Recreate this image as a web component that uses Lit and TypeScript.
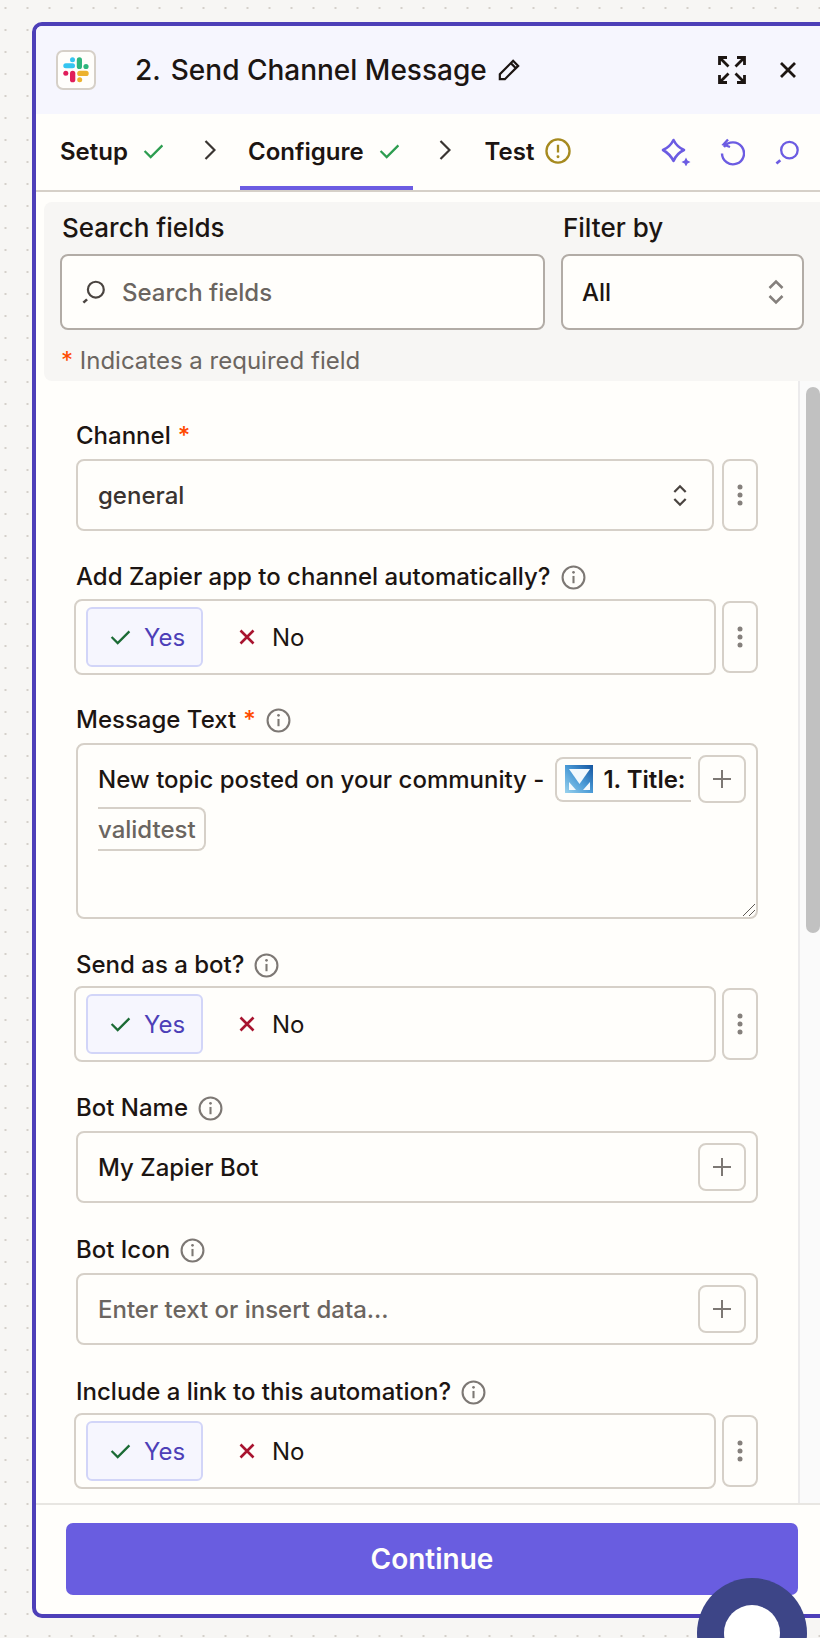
import { LitElement, html, css } from "lit";
import { customElement } from "lit/decorators.js";

const info = html`<svg class="info" viewBox="0 0 24 24" fill="none" stroke="#7d7874" stroke-width="2"><circle cx="12" cy="12" r="10.5"/><path d="M12 10.5v7" stroke-width="2"/><circle cx="12" cy="7" r="1.3" fill="#7d7874" stroke="none"/></svg>`;
const chevUD = (c: string, cls: string) => html`<svg class="${cls}" viewBox="0 0 16 26" fill="none" stroke="${c}" stroke-width="2.6"><path d="M1.5 9 8 2.500l6.500 6.500M1.500 17 8 23.500l6.500-6.500"/></svg>`;
const plus = html`<svg class="plus" viewBox="0 0 20 20" fill="none" stroke="#7d7874" stroke-width="2"><path d="M10 1v18M1 10h18"/></svg>`;
const more = html`<svg class="dots" viewBox="0 0 6 22" fill="#85807c"><circle cx="3" cy="3" r="2.500"/><circle cx="3" cy="11" r="2.500"/><circle cx="3" cy="19" r="2.500"/></svg>`;
const greenCheck = html`<svg class="gcheck" viewBox="0 0 22 16" fill="none" stroke="#2d9d50" stroke-width="2.400"><path d="M1.500 7.500 8 14 20.500 1.500"/></svg>`;
const chevR = html`<svg class="chev" viewBox="0 0 12 20" fill="none" stroke="#3a3532" stroke-width="2.200"><path d="M1.500 1 10.500 10 1.500 19"/></svg>`;
const searchIcon = (c: string, cls: string) => html`<svg class="${cls}" viewBox="0 0 26 26" fill="none" stroke="${c}" stroke-width="2.400"><circle cx="15" cy="10.500" r="8.600"/><path d="M5.500 21 1.500 24.500" stroke-width="2.800"/></svg>`;

const toggle = (m: string) => html`
  <div class="row ${m}">
    <div class="toggle">
      <div class="yes">
        <svg class="ycheck" viewBox="0 0 22 16" fill="none" stroke="#1b6b35" stroke-width="2.400"><path d="M1.500 7.500 8 14 20.500 1.500"/></svg>
        <span>Yes</span>
      </div>
      <div class="no">
        <svg class="xicon" viewBox="0 0 16 16" fill="none" stroke="#a8142f" stroke-width="2.600"><path d="M1.500 1.500l13 13M14.500 1.500l-13 13"/></svg>
        <span>No</span>
      </div>
    </div>
    <div class="more short">${more}</div>
  </div>`;

@customElement("app-root")
export class AppRoot extends LitElement {
  static styles = css`
    :host {
      display: block;
      width: 820px;
      height: 1638px;
      overflow: hidden;
      position: relative;
      box-sizing: border-box;
      padding: 22px 0 0 32px;
      background-color: #f7f6f4;
      background-image: radial-gradient(circle, #d4d0ca 1px, transparent 1.4px);
      background-size: 22px 22px;
      background-position: -5.5px -3px;
      font-family: Inter, "Noto Sans", sans-serif;
      color: #1c1512;
    }
    * { box-sizing: border-box; }
    .card {
      width: 800px;
      height: 1596px;
      border: 4px solid #4d3fb8;
      border-radius: 10px;
      background: #fffefb;
      display: flex;
      flex-direction: column;
      overflow: hidden;
    }
    .head {
      height: 88px;
      flex: none;
      background: #f6f6fe;
      display: flex;
      align-items: center;
      padding-left: 20px;
    }
    .logo {
      width: 40px; height: 40px;
      border: 2px solid #d6d0c8;
      border-radius: 7px;
      background: #fffefb;
      display: flex; align-items: center; justify-content: center;
    }
    .logo svg { width: 26px; height: 26px; }
    .title {
      margin-left: 39px;
      font-size: 28px;
      font-weight: 500;
      display: flex;
      align-items: center;
      white-space: nowrap;
    }
    .title .n { margin-right: 10px; }
    .pencil { width: 22px; height: 22px; margin-left: 11px; }
    .expand { width: 28px; height: 28px; margin-left: auto; }
    .close { width: 16px; height: 16px; margin-left: 34px; margin-right: 32px; flex: none; }
    .tabs {
      height: 78px;
      flex: none;
      border-bottom: 2px solid #d6d0c8;
      display: flex;
      align-items: stretch;
      padding-left: 16px;
    }
    .tab {
      display: flex;
      align-items: center;
      padding: 2px 13px 0 8px;
      border-bottom: 4px solid transparent;
      font-size: 24px;
      font-weight: 600;
      white-space: nowrap;
    }
    .tab.on { border-bottom-color: #6c5ce2; }
    .gcheck { width: 21px; height: 15px; margin-left: 15px; }
    .chev { width: 12px; height: 20px; }
    .chevw { display: flex; align-items: center; padding-bottom: 4px; width: 12px; }
    .c1 { margin: 0 24px 0 27px; }
    .c2 { margin: 0 26px 0 26px; }
    .warn { width: 26px; height: 26px; margin-left: 11px; }
    .tools { margin-left: auto; display: flex; align-items: center; margin-right: 28px; }
    .sparkle { width: 30px; height: 28px; }
    .undo { width: 25px; height: 28px; margin-left: 29px; }
    .find { width: 25px; height: 25px; margin-left: 30px; }
    .panel {
      flex: none;
      margin: 10px 0 0 8px;
      height: 179px;
      background: #f7f6f4;
      border-radius: 8px;
      padding: 0 16px;
      display: flex;
      flex-direction: column;
    }
    .prow { display: grid; grid-template-columns: 485px 243px; gap: 16px; }
    .plabel { font-size: 26px; font-weight: 500; height: 52px; padding: 10px 0 0 2px; line-height: 32px; }
    .pbox {
      height: 76px;
      background: #fffefb;
      border: 2px solid #b2aca6;
      border-radius: 8px;
      display: flex;
      align-items: center;
      font-size: 24px;
    }
    .pbox .sicon { width: 24px; height: 24px; margin: 0 16px 0 20px; }
    .ph { color: #6b6560; font-weight: 500; }
    .all { padding: 0 18px 0 19px; font-weight: 500; justify-content: space-between; }
    .ud-l { width: 16px; height: 26px; }
    .ud-s { width: 14px; height: 23px; }
    .req { font-size: 24px; color: #6b6560; margin-top: 16px; line-height: 30px; padding-left: 1px; }
    .star { color: #ff4a00; }
    .scroll {
      flex: 1;
      min-height: 0;
      display: flex;
      overflow: hidden;
    }
    .form { width: 762px; flex: none; padding: 41px 0 0 40px; }
    .track {
      flex: 1;
      background: #fafafa;
      border-left: 2px solid #ecebec;
      padding: 6px 0 0 6px;
    }
    .thumb { height: 546px; background: #c1c1c1; border-radius: 7px; width: 14px; }
    .label {
      font-size: 24px;
      font-weight: 500;
      height: 28px;
      line-height: 28px;
      display: flex;
      align-items: center;
      white-space: nowrap;
    }
    .label .star { margin-left: 7px; }
    .info { width: 25px; height: 25px; margin-left: 10px; flex: none; }
    .row { display: flex; align-items: center; }
    .m7 { margin-top: 7px; }
    .m8 { margin-top: 8px; }
    .m9 { margin-top: 9px; }
    .select, .input {
      width: 638px;
      height: 72px;
      border: 2px solid #d6d0c8;
      border-radius: 8px;
      display: flex;
      align-items: center;
      padding: 0 25px 0 20px;
      font-size: 24px;
      font-weight: 500;
      color: #3a3330;
    }
    .select { justify-content: space-between; }
    .more {
      width: 36px;
      height: 72px;
      border: 2px solid #d6d0c8;
      border-radius: 8px;
      margin-left: 8px;
      display: flex;
      align-items: center;
      justify-content: center;
    }
    .more.short { margin-left: 6px; }
    .dots { width: 6px; height: 22px; }
    .toggle {
      width: 642px;
      height: 76px;
      margin-left: -2px;
      border: 2px solid #d6d0c8;
      border-radius: 8px;
      padding: 6px 10px;
      display: flex;
      align-items: center;
      font-size: 24px;
      font-weight: 400;
    }
    .yes {
      width: 117px;
      height: 60px;
      background: #f6f6fe;
      border: 2px solid #d2d5f8;
      border-radius: 6px;
      display: flex;
      align-items: center;
      padding-left: 22px;
      color: #4d3fb8;
    }
    .ycheck { width: 21px; height: 15px; margin-right: 13px; flex: none; }
    .no { display: flex; align-items: center; margin-left: 36px; }
    .xicon { width: 16px; height: 16px; margin-right: 17px; }
    .g31 { margin-top: 31px; }
    .g32 { margin-top: 32px; }
    .g33 { margin-top: 33px; }
    .msg {
      margin-top: 9px;
      width: 682px;
      height: 176px;
      border: 2px solid #d6d0c8;
      border-radius: 8px;
      position: relative;
      padding: 10px 9px 0 20px;
      font-size: 24px;
      font-weight: 500;
    }
    .line { display: flex; align-items: center; height: 48px; white-space: nowrap; }
    .chip {
      height: 45px;
      margin-left: 11px;
      width: 136px;
      border: 2px solid #d6d0c8;
      border-right: none;
      border-radius: 8px 0 0 8px;
      display: flex;
      align-items: center;
      padding-left: 8px;
      font-weight: 600;
      flex: none;
      overflow: hidden;
    }
    .mail { width: 28px; height: 28px; margin-right: 10px; flex: none; }
    .pluswrap {
      width: 48px;
      height: 48px;
      flex: none;
      border: 2px solid #d6d0c8;
      border-radius: 8px;
      display: flex;
      align-items: center;
      justify-content: center;
    }
    .plus { width: 20px; height: 20px; }
    .msg .pluswrap { margin-left: 7px; }
    .chip2 {
      margin-top: 4px;
      width: 108px;
      height: 44px;
      border: 2px solid #d6d0c8;
      border-left: none;
      border-radius: 0 8px 8px 0;
      display: flex;
      align-items: center;
      color: #6b6560;
    }
    .grip { position: absolute; right: 0; bottom: 0; width: 14px; height: 14px; }
    .input { width: 682px; justify-content: space-between; padding-right: 10px; color: #1c1512; }
    .foot {
      height: 111px;
      flex: none;
      border-top: 2px solid #e8e6e2;
      padding: 18px 0 0 30px;
    }
    .btn {
      width: 732px;
      height: 72px;
      background: #695de0;
      border-radius: 7px;
      color: #fffefb;
      font-size: 28px;
      font-weight: 600;
      display: flex;
      align-items: center;
      justify-content: center;
    }
    .bubble {
      position: absolute;
      left: 697px;
      top: 1578px;
      width: 110px;
      height: 110px;
      border-radius: 50%;
      background: #3d4587;
      display: flex;
      align-items: center;
      justify-content: center;
    }
    .bubble i { width: 56px; height: 56px; border-radius: 50%; background: #fff; }
  `;

  render() {
    return html`
      <div class="card">
        <div class="head">
          <div class="logo">
            <svg viewBox="0 0 26 26">
              <rect x="0.300" y="6.300" width="11.700" height="5" rx="2.500" fill="#36c5f0"/>
              <circle cx="9.500" cy="2.800" r="2.500" fill="#36c5f0"/>
              <rect x="13.800" y="0.300" width="5.200" height="11.700" rx="2.600" fill="#2eb67d"/>
              <circle cx="23" cy="9.500" r="2.600" fill="#2eb67d"/>
              <rect x="14.200" y="13.800" width="11.500" height="5.200" rx="2.600" fill="#ecb22e"/>
              <circle cx="16.700" cy="22.800" r="2.500" fill="#ecb22e"/>
              <rect x="7" y="13.800" width="5.300" height="11.500" rx="2.600" fill="#e01e5a"/>
              <circle cx="2.800" cy="16.300" r="2.500" fill="#e01e5a"/>
            </svg>
          </div>
          <div class="title"><span class="n">2.</span><span>Send Channel Message</span>
            <svg class="pencil" viewBox="0 0 24 24" fill="none" stroke="#1c1512" stroke-width="2.400"><path d="M2 22v-5.500L16.500 2 22 7.500 7.500 22zM14 4.500l5.500 5.500"/></svg>
          </div>
          <svg class="expand" viewBox="0 0 28 28" fill="none" stroke="#1c1512" stroke-width="2.800">
            <path d="M1.500 9V1.500H9M1.500 1.500l9 9M26.500 9V1.500H19M26.500 1.500l-9 9M1.500 19v7.500H9M1.500 26.500l9-9M26.500 19v7.500H19M26.500 26.500l-9-9"/>
          </svg>
          <svg class="close" viewBox="0 0 16 16" fill="none" stroke="#1c1512" stroke-width="2.800"><path d="M1 1l14 14M15 1 1 15"/></svg>
        </div>
        <div class="tabs">
          <div class="tab"><span>Setup</span>${greenCheck}</div>
          <div class="chevw c1">${chevR}</div>
          <div class="tab on"><span>Configure</span>${greenCheck}</div>
          <div class="chevw c2">${chevR}</div>
          <div class="tab"><span>Test</span>
            <svg class="warn" viewBox="0 0 27 27" fill="none" stroke="#a68a1f" stroke-width="2.400"><circle cx="13.500" cy="13.500" r="12"/><path d="M13.500 7v8"/><circle cx="13.500" cy="19.500" r="1.500" fill="#a68a1f" stroke="none"/></svg>
          </div>
          <div class="tools">
            <svg class="sparkle" viewBox="0 0 30 28" fill="none" stroke="#6c5ce2" stroke-width="2.600" stroke-linejoin="round">
              <path d="M12.500 2Q16 9 23 12Q16 15 12.500 23Q9 16 2 12Q9 9 12.500 2z"/>
              <path d="M25 19.500l1.500 3 3 1.500-3 1.500-1.500 3-1.500-3-3-1.500 3-1.500z" fill="#6c5ce2" stroke="none"/>
            </svg>
            <svg class="undo" viewBox="0 0 25 28" fill="none" stroke="#6c5ce2" stroke-width="2.400">
              <path d="M4 9A11 11 0 1 1 2 15.500M8 1.500 3.500 6.500 10 9"/>
            </svg>
            ${searchIcon("#6c5ce2", "find")}
          </div>
        </div>
        <div class="panel">
          <div class="prow">
            <div>
              <div class="plabel">Search fields</div>
              <div class="pbox">${searchIcon("#4a4440", "sicon")}<span class="ph">Search fields</span></div>
            </div>
            <div>
              <div class="plabel">Filter by</div>
              <div class="pbox all"><span>All</span>${chevUD("#85807c", "ud-l")}</div>
            </div>
          </div>
          <div class="req"><span class="star">*</span> Indicates a required field</div>
        </div>
        <div class="scroll">
          <div class="form">
            <div class="label">Channel <span class="star">*</span></div>
            <div class="row m9">
              <div class="select"><span>general</span>${chevUD("#4a4440", "ud-s")}</div>
              <div class="more">${more}</div>
            </div>
            <div class="label g32">Add Zapier app to channel automatically? ${info}</div>
            ${toggle("m8")}
            <div class="label g31">Message Text <span class="star">*</span> ${info}</div>
            <div class="msg">
              <div class="line">
                <span>New topic posted on your community -</span>
                <div class="chip">
                  <svg class="mail" viewBox="0 0 28 28">
                    <defs><linearGradient id="mg" x1="0" y1="1" x2="1" y2="0"><stop offset="0" stop-color="#9ad3ee"/><stop offset=".5" stop-color="#4a9ad6"/><stop offset="1" stop-color="#14549f"/></linearGradient></defs>
                    <rect width="28" height="28" fill="url(#mg)"/>
                    <path d="M4 4h21L14.500 19z" fill="#f2f9fd"/>
                    <path d="M4 17v8h7zM25 17v8h-7z" fill="#f4fafd"/>
                  </svg>
                  <span>1. Title:</span>
                </div>
                <div class="pluswrap">${plus}</div>
              </div>
              <div class="chip2">validtest</div>
              <svg class="grip" viewBox="0 0 14 14" fill="none" stroke="#5f5a56" stroke-width="1"><path d="M1 13 13 1M7 13l6-6"/></svg>
            </div>
            <div class="label g32">Send as a bot? ${info}</div>
            ${toggle("m7")}
            <div class="label g32">Bot Name ${info}</div>
            <div class="row m9"><div class="input"><span>My Zapier Bot</span><div class="pluswrap">${plus}</div></div></div>
            <div class="label g33">Bot Icon ${info}</div>
            <div class="row m9"><div class="input"><span class="ph">Enter text or insert data...</span><div class="pluswrap">${plus}</div></div></div>
            <div class="label g33">Include a link to this automation? ${info}</div>
            ${toggle("m7")}
          </div>
          <div class="track"><div class="thumb"></div></div>
        </div>
        <div class="foot"><div class="btn">Continue</div></div>
      </div>
      <div class="bubble"><i></i></div>
    `;
  }
}
